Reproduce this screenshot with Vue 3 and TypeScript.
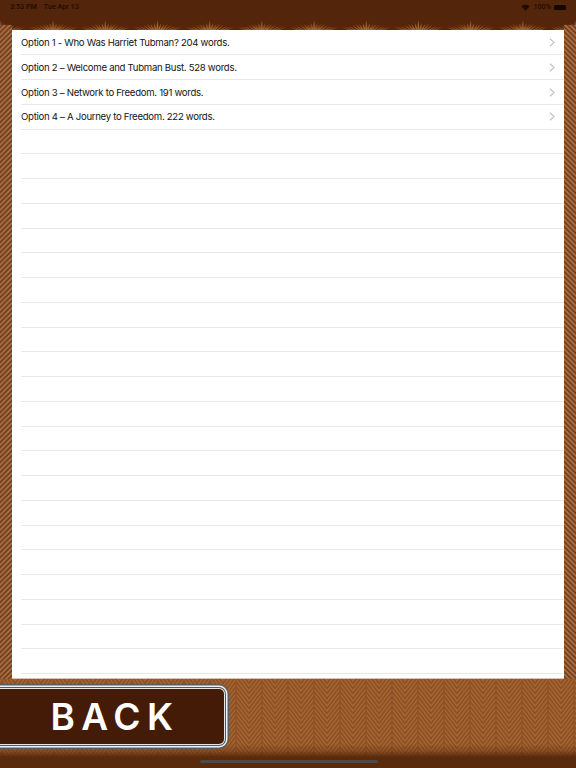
<script setup lang="ts">
const rows: string[] = [
  'Option 1 - Who Was Harriet Tubman? 204 words.',
  'Option 2 – Welcome and Tubman Bust. 528 words.',
  'Option 3 – Network to Freedom. 191 words.',
  'Option 4 – A Journey to Freedom. 222 words.',
  ...Array<string>(22).fill(''),
]
const offsets: number[] = [-30, -25, -20, -15, -10, -5, 0, 5, 10]
const tips: number[][] = [
  [26, 20], [22.5, 23], [29.5, 23], [19, 24], [33, 24], [15.5, 24], [36.5, 24], [12, 25], [40, 25], [8, 26], [44, 26], [4.5, 26.5], [47.5, 26.5], [1, 27], [51, 27],
]
// Each ray of the top fringe is a thin wedge that widens toward the panel edge.
const rays: string[] = tips.map(([x, y]) => {
  const base = 26 + ((x - 26) * 5) / (36 - y)
  return `${x},${y} ${base - 1.3},31 ${base + 1.3},31`
})
</script>

<template>
  <div class="page">
    <svg class="backdrop" width="576" height="768" viewBox="0 0 576 768" aria-hidden="true">
      <defs>
        <pattern id="chev" patternUnits="userSpaceOnUse" x="2" y="679" width="26" height="5">
          <rect width="26" height="5" fill="#8b4e26" />
          <polyline
            v-for="o in offsets"
            :key="o"
            :points="`0,${o} 13,${o + 17} 26,${o}`"
            fill="none"
            stroke="#a4642e"
            stroke-width="1.6"
          />
          <path d="M0 0 V5 M26 0 V5" stroke="#8f5126" stroke-width="1.2" />
        </pattern>
        <pattern id="diagL" patternUnits="userSpaceOnUse" width="5" height="5">
          <rect width="5" height="5" fill="#7a421c" />
          <path d="M-1 1 L1 -1 M0 5 L5 0 M4 6 L6 4" stroke="#a9744a" stroke-width="1.5" />
        </pattern>
        <pattern id="diagR" patternUnits="userSpaceOnUse" width="5" height="5">
          <rect width="5" height="5" fill="#7a421c" />
          <path d="M-1 4 L1 6 M0 0 L5 5 M4 -1 L6 1" stroke="#a9744a" stroke-width="1.5" />
        </pattern>
        <pattern id="star" patternUnits="userSpaceOnUse" x="27" y="0" width="52.2" height="36">
          <polygon v-for="(r, i) in rays" :key="i" :points="r" fill="#9c6a3a" />
        </pattern>
        <linearGradient id="fade" x1="0" y1="0" x2="0" y2="1">
          <stop offset="0" stop-color="#5a2a0d" stop-opacity="0" />
          <stop offset="0.55" stop-color="#5a2a0d" stop-opacity="0.35" />
          <stop offset="1" stop-color="#5a2a0d" stop-opacity="1" />
        </linearGradient>
      </defs>
      <rect width="576" height="768" fill="#53250b" />
      <rect y="18" width="576" height="13" fill="url(#star)" />
      <rect y="25" width="12" height="655" fill="url(#diagL)" />
      <rect x="564" y="25" width="12" height="655" fill="url(#diagR)" />
      <rect y="679" width="576" height="89" fill="url(#chev)" />
      <rect y="744" width="576" height="13" fill="url(#fade)" />
      <rect y="757" width="576" height="11" fill="#5a2a0d" />
    </svg>

    <header class="status">
      <div class="status-left">
        <span>3:53 PM</span>
        <span>Tue Apr 13</span>
      </div>
      <div class="status-right">
        <svg width="9" height="7" viewBox="0 0 18 14" aria-hidden="true">
          <path d="M9 13.5 L0.5 4.5 A12.5 12.5 0 0 1 17.5 4.5 Z" fill="#1e0c02" />
        </svg>
        <span>100%</span>
        <span class="battery"></span>
      </div>
    </header>

    <ul class="list">
      <li v-for="(row, i) in rows" :key="i" class="row">
        <div class="row-inner">
          <span class="label">{{ row }}</span>
          <svg v-if="row" class="chevron" width="6" height="9" viewBox="0 0 6 9" aria-hidden="true">
            <path d="M1 0.8 L5 4.5 L1 8.2" fill="none" stroke="#c4c4c8" stroke-width="1.2" />
          </svg>
        </div>
      </li>
    </ul>

    <div class="footer">
      <button class="back" type="button">BACK</button>
    </div>

    <div class="home-indicator"></div>
  </div>
</template>

<style scoped>
.page {
  position: relative;
  width: 576px;
  height: 768px;
  overflow: hidden;
  display: flex;
  flex-direction: column;
  font-family: Inter, "Liberation Sans", sans-serif;
}
.backdrop {
  position: absolute;
  inset: 0;
}
.status {
  position: relative;
  height: 30px;
  flex: none;
  display: flex;
  justify-content: space-between;
  align-items: flex-start;
  padding: 3px 10px 0;
  box-sizing: border-box;
  font-family: Roboto, "Liberation Sans", sans-serif;
  font-size: 7.2px;
  font-weight: 500;
  line-height: 8px;
  color: #1e0c02;
}
.status-left {
  display: flex;
  gap: 7px;
}
.status-right {
  display: flex;
  align-items: center;
  gap: 3px;
}
.battery {
  width: 12px;
  height: 5px;
  border-radius: 1.5px;
  background: #140801;
}
.list {
  position: relative;
  flex: none;
  height: 649px;
  margin: 0 12px;
  padding: 0.7px 0 0;
  box-sizing: border-box;
  list-style: none;
  overflow: hidden;
  background: #fff;
  border-bottom: 1px solid #d8c3ae;
}
.row {
  height: 24.75px;
  padding-left: 9px;
  box-sizing: border-box;
}
.row-inner {
  height: 100%;
  box-sizing: border-box;
  display: flex;
  align-items: center;
  justify-content: space-between;
  padding-right: 9px;
  border-bottom: 1px solid #e9e9ea;
}
.label {
  font-size: 9.6px;
  letter-spacing: -0.29px;
  color: #141414;
}
.chevron {
  flex: none;
}
.footer {
  position: relative;
  flex: 1;
  padding-top: 10px;
}
.back {
  display: block;
  width: 230px;
  height: 55px;
  margin: 0 0 0 -6px;
  padding: 0 0 0 12px;
  border: 0;
  border-radius: 5px;
  background: #431b06;
  box-shadow: 0 0 0 1px #e5e5e5, 0 0 0 2px #555, 0 0 0 3.5px #f0f0f0, 0 0 0 5px #5b5b5b;
  color: #fff;
  font-family: Inter, "Liberation Sans", sans-serif;
  font-size: 37px;
  font-weight: 600;
  letter-spacing: 6.5px;
  line-height: 55px;
}
.home-indicator {
  position: absolute;
  left: 200px;
  bottom: 5px;
  width: 178px;
  height: 3px;
  border-radius: 2px;
  background: #4a4a48;
}
</style>
